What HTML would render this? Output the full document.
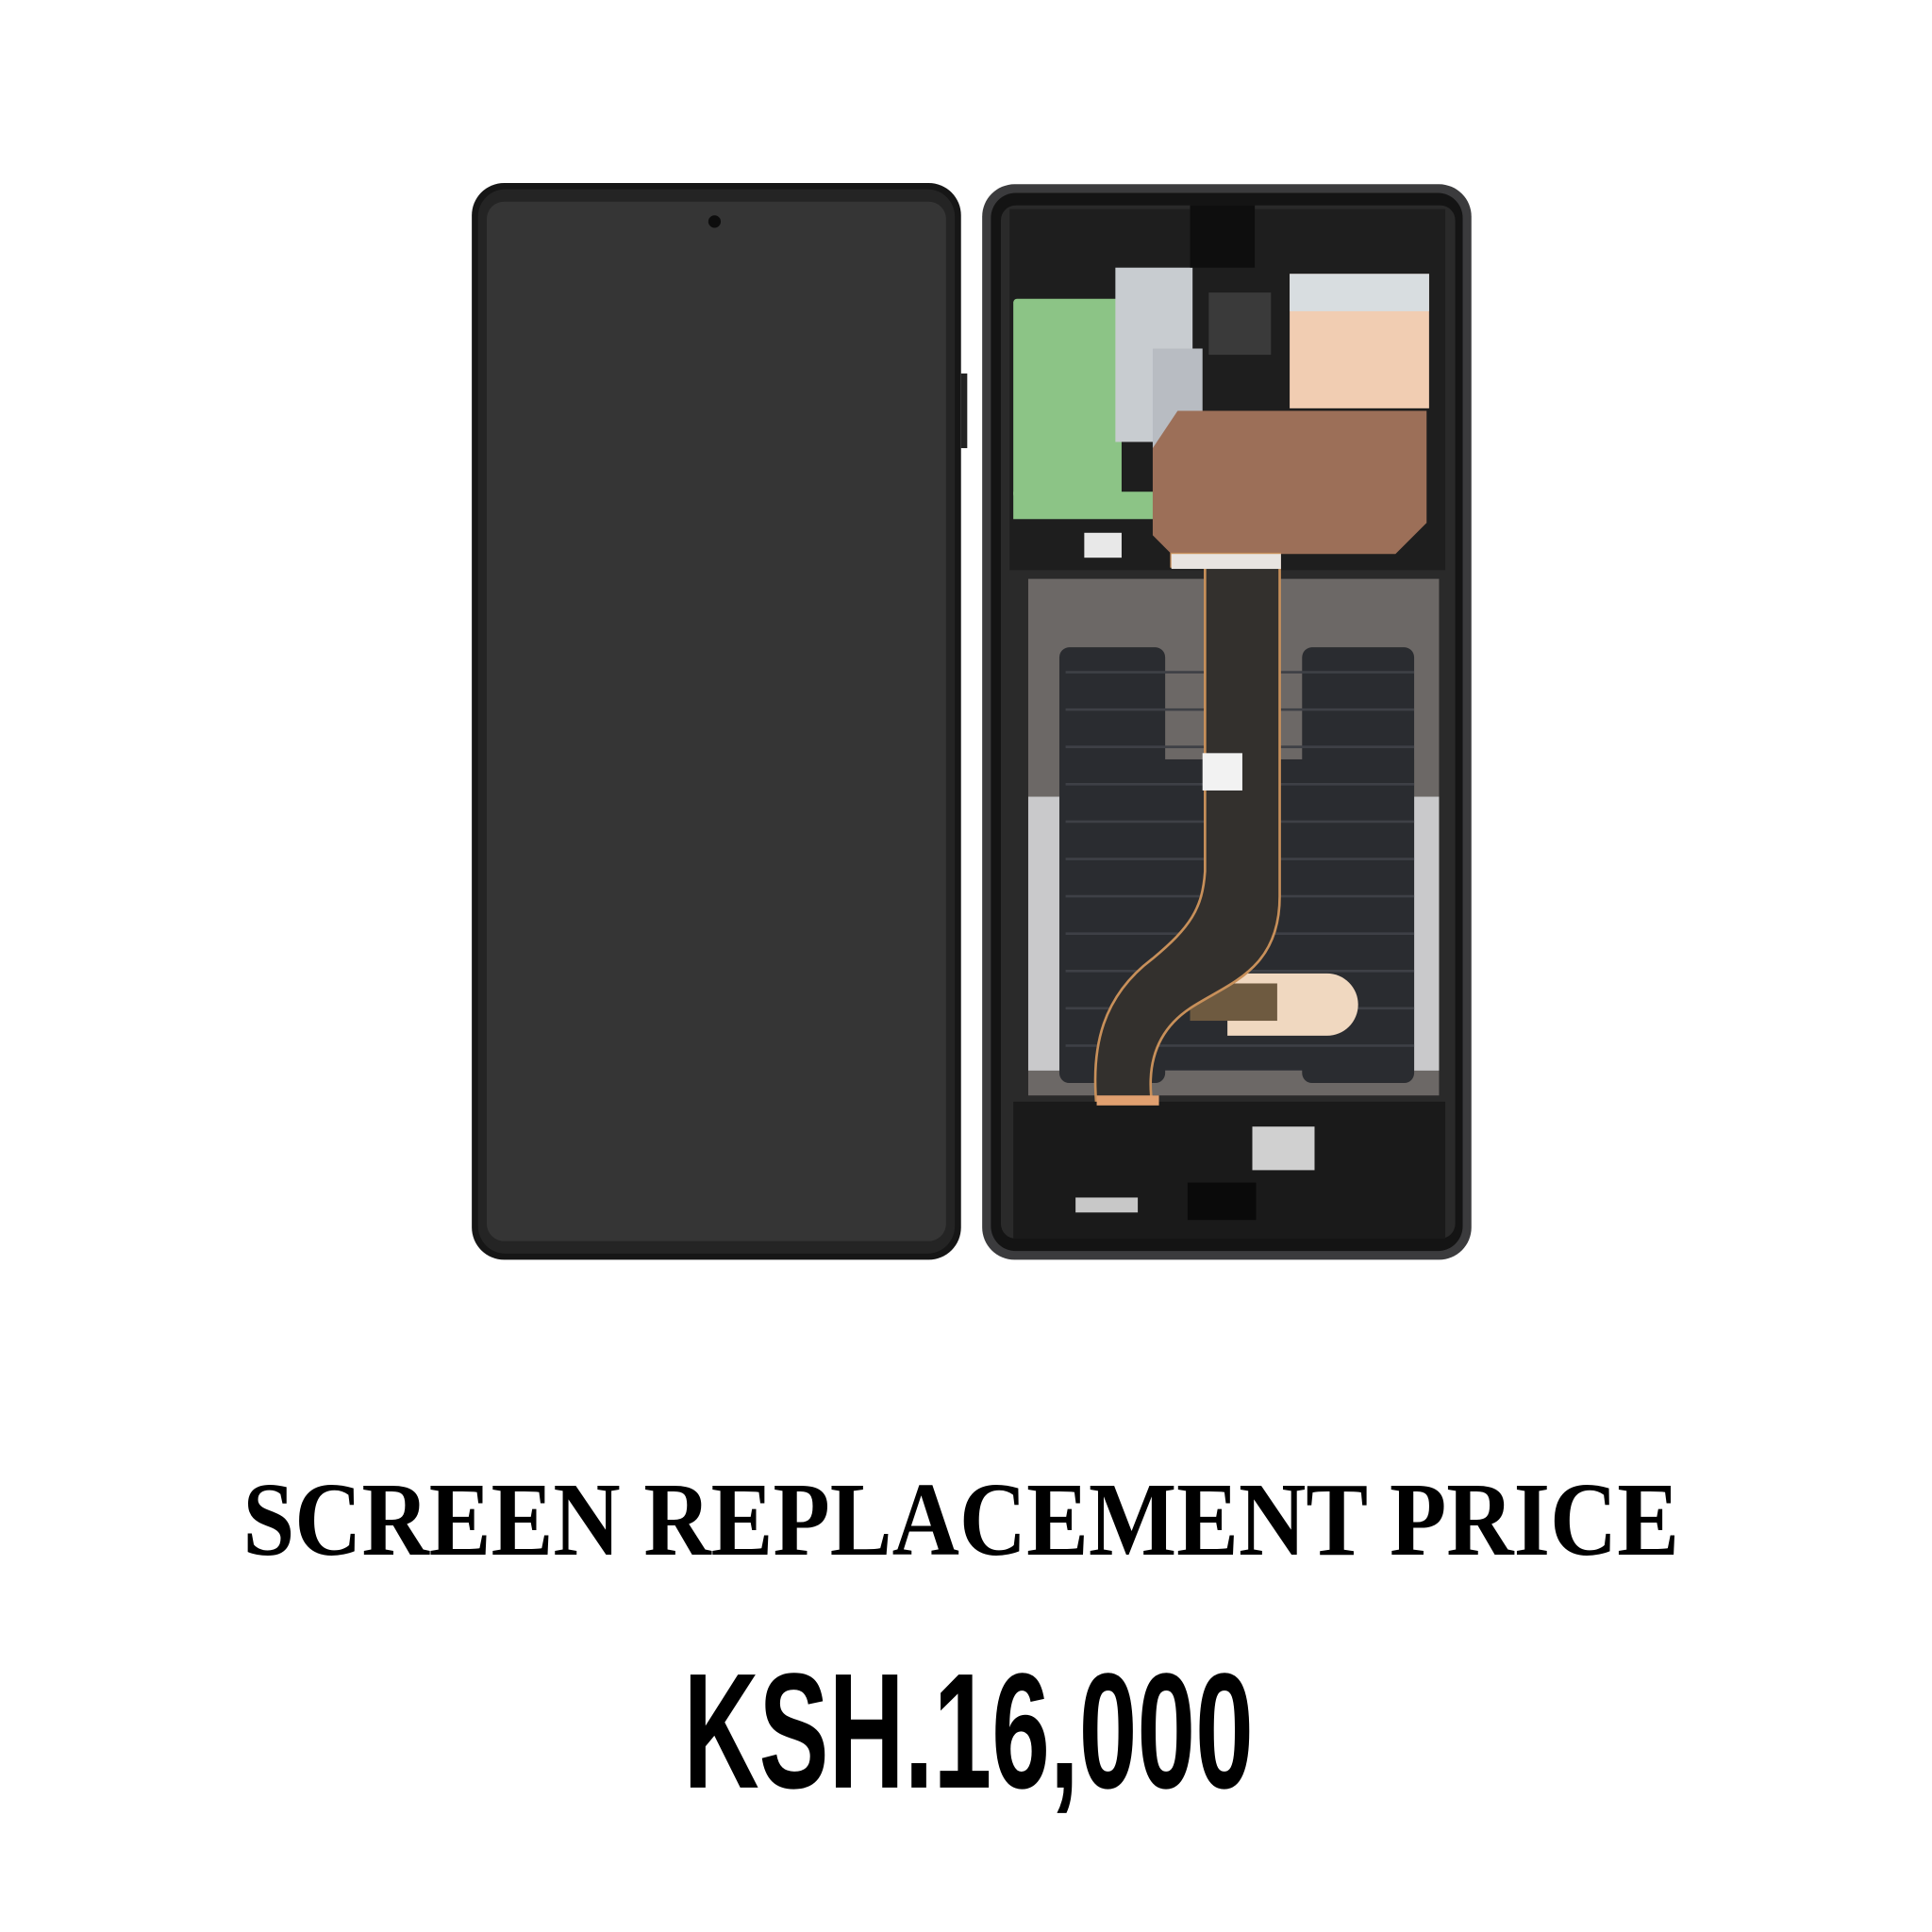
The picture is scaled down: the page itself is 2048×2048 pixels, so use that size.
<!DOCTYPE html>
<html><head><style>html,body{margin:0;padding:0;background:#fff}svg{display:block}</style></head>
<body>
<svg width="2048" height="2048" viewBox="0 0 1552 1552" xmlns="http://www.w3.org/2000/svg">
<rect width="1552" height="1552" fill="#fff"/>
<g transform="translate(-4,0)">
<rect x="383" y="147" width="393" height="865" rx="26" fill="#161616"/>
<rect x="776" y="300" width="5" height="60" fill="#222"/>
<rect x="388" y="152" width="383" height="855" rx="22" fill="#242424"/>
<rect x="395" y="162" width="369" height="835" rx="14" fill="#353535"/>
<circle cx="578" cy="178" r="5" fill="#0d0d0d"/>
<rect x="793" y="148" width="393" height="864" rx="26" fill="#3b3b3d"/>
<rect x="800" y="155" width="379" height="850" rx="20" fill="#141414"/>
<rect x="808" y="165" width="365" height="830" rx="12" fill="#2a2a2a"/>
<rect x="815" y="168" width="350" height="290" fill="#1e1e1e"/>
<rect x="818" y="240" width="87" height="160" rx="3" fill="#8cc486"/>
<rect x="818" y="395" width="140" height="22" fill="#8cc486"/>
<rect x="900" y="215" width="62" height="140" fill="#c8ccd0"/>
<rect x="930" y="280" width="40" height="80" fill="#b8bcc2"/>
<rect x="960" y="165" width="52" height="50" fill="#0e0e0e"/>
<rect x="975" y="235" width="50" height="50" fill="#3a3a3a"/>
<rect x="1040" y="220" width="112" height="108" fill="#f1cdb2"/>
<rect x="1040" y="220" width="112" height="30" fill="#d8dde0"/>
<path d="M950 330 H1150 V420 L1125 445 H945 L930 430 V360 Z" fill="#9c6f58"/>
<rect x="875" y="428" width="30" height="20" fill="#e8e8e8"/>
<rect x="830" y="465" width="330" height="415" fill="#6c6866"/>
<rect x="830" y="640" width="330" height="220" fill="#c9c9cb"/>
<rect x="855" y="520" width="85" height="350" rx="8" fill="#2a2c30"/>
<rect x="1050" y="520" width="90" height="350" rx="8" fill="#2a2c30"/>
<rect x="860" y="610" width="280" height="250" fill="#2a2c30"/>
<g stroke="#3e4046" stroke-width="2">
<line x1="860" y1="540" x2="1140" y2="540"/><line x1="860" y1="570" x2="1140" y2="570"/><line x1="860" y1="600" x2="1140" y2="600"/><line x1="860" y1="630" x2="1140" y2="630"/><line x1="860" y1="660" x2="1140" y2="660"/><line x1="860" y1="690" x2="1140" y2="690"/><line x1="860" y1="720" x2="1140" y2="720"/><line x1="860" y1="750" x2="1140" y2="750"/><line x1="860" y1="780" x2="1140" y2="780"/><line x1="860" y1="810" x2="1140" y2="810"/><line x1="860" y1="840" x2="1140" y2="840"/>
</g>
<path d="M990 782 H1070 A25 25 0 0 1 1070 832 H990 Z" fill="#f0d8c0"/>
<rect x="960" y="790" width="70" height="30" fill="#6e5a40"/>
<path d="M945 445 H1032 V720 C1032 780 990 790 960 810 C930 830 925 860 930 890 H885 C880 840 890 800 930 770 C960 745 970 730 972 700 V455 H945 Z" fill="#33302d" stroke="#c8905a" stroke-width="2"/>
<rect x="945" y="445" width="88" height="12" fill="#e8e4e0"/>
<rect x="970" y="605" width="32" height="30" fill="#f2f2f2"/>
<rect x="818" y="885" width="347" height="110" fill="#1a1a1a"/>
<rect x="1010" y="905" width="50" height="35" fill="#d0d0d0"/>
<rect x="958" y="950" width="55" height="30" fill="#0a0a0a"/>
<rect x="868" y="962" width="50" height="12" fill="#c8c8c8"/>
<rect x="885" y="880" width="50" height="8" fill="#e0a070"/>
</g>
<text x="772" y="1249" text-anchor="middle" font-family="Liberation Serif, serif" font-weight="bold" font-size="84" textLength="1154" lengthAdjust="spacingAndGlyphs" fill="#000">SCREEN REPLACEMENT PRICE</text>
<text x="778" y="1436" text-anchor="middle" font-family="Liberation Sans, sans-serif" font-weight="bold" font-size="132" textLength="458" lengthAdjust="spacingAndGlyphs" fill="#000">KSH.16,000</text>
</svg>
</body></html>
